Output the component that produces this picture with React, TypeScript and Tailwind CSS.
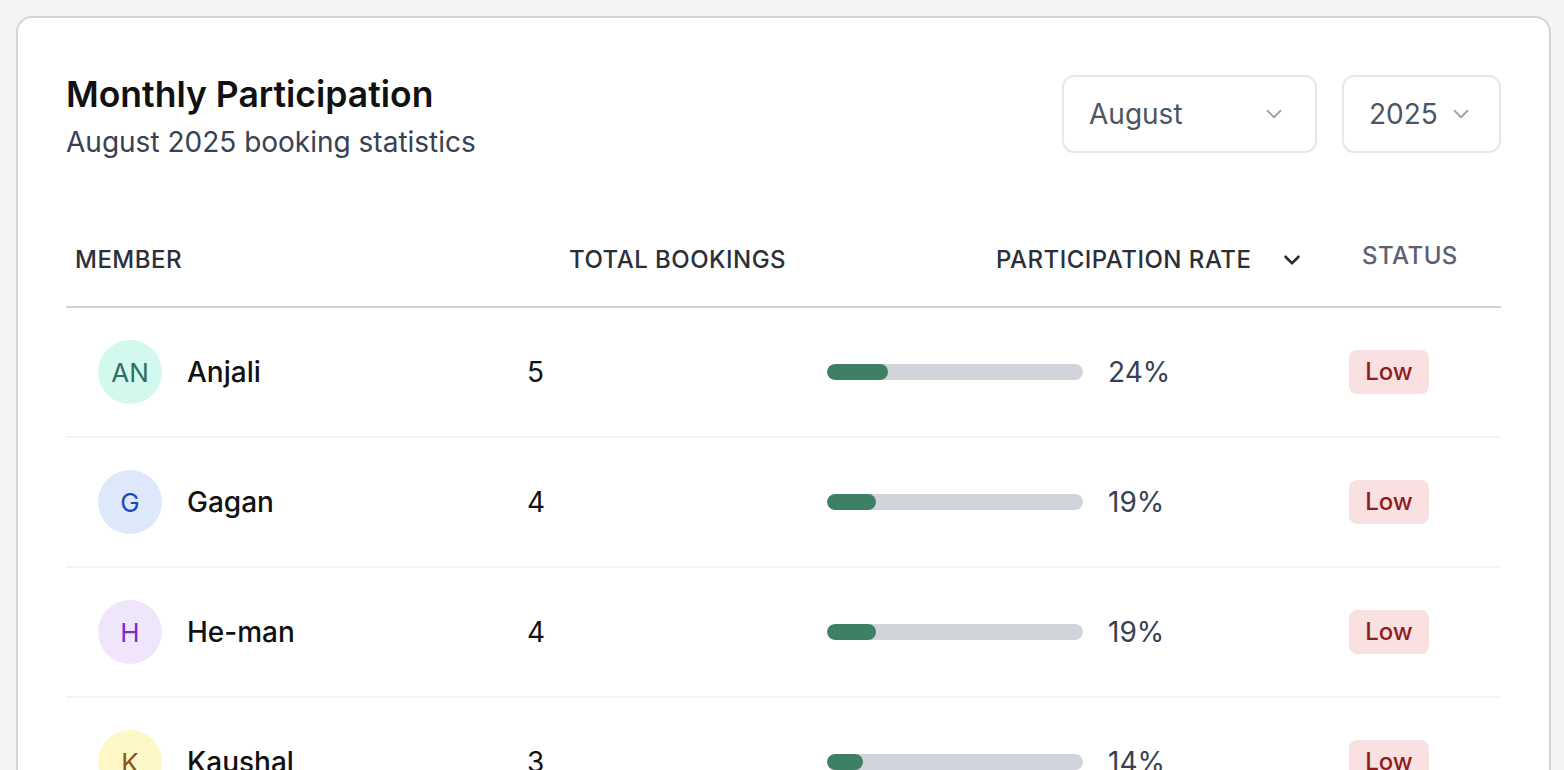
import React from 'react';

type Member = {
  name: string;
  initials: string;
  bookings: number;
  rate: number;
  avatar: string;
};

const members: Member[] = [
  { name: 'Anjali', initials: 'AN', bookings: 5, rate: 24, avatar: 'bg-[#d3f8ee] text-[#2f6f61]' },
  { name: 'Gagan', initials: 'G', bookings: 4, rate: 19, avatar: 'bg-[#dde8fb] text-[#1f47c4]' },
  { name: 'He-man', initials: 'H', bookings: 4, rate: 19, avatar: 'bg-[#efe6fc] text-[#7a2ccd]' },
  { name: 'Kaushal', initials: 'K', bookings: 3, rate: 14, avatar: 'bg-[#fdf7c7] text-[#8a5410]' },
  { name: 'Meera', initials: 'M', bookings: 2, rate: 10, avatar: 'bg-[#fde3e3] text-[#9b1c1c]' },
];

const Chevron: React.FC<{ className?: string; strokeWidth?: number }> = ({ className, strokeWidth = 2 }) => (
  <svg viewBox="0 0 24 24" fill="none" stroke="currentColor" strokeWidth={strokeWidth} strokeLinecap="round" strokeLinejoin="round" className={className}>
    <path d="m6 9 6 6 6-6" />
  </svg>
);

const Select: React.FC<{ value: string; className: string }> = ({ value, className }) => (
  <button className={`flex h-[78px] shrink-0 items-center rounded-[12px] border-2 border-[#e5e7eb] bg-white pl-[25px] text-[28px] text-[#4b5563] ${className}`}>
    <span>{value}</span>
    <Chevron className="h-[26px] w-[26px] text-[#9ca3af]" strokeWidth={1.7} />
  </button>
);

export default function App() {
  return (
    <div className="min-h-screen bg-[#f3f4f6] p-[16px] font-['Inter',sans-serif]">
      <div className="w-[1535px] rounded-[16px] border-2 border-[#d1d5db] bg-white px-[48px] pt-[55px]">
        <div className="flex items-start justify-between">
          <div>
            <h1 className="text-[35.5px] font-semibold leading-[43px] text-[#111111]">Monthly Participation</h1>
            <p className="mt-[8px] text-[28px] leading-[36px] text-[#374151]">August 2025 booking statistics</p>
          </div>
          <div className="mt-[2px] flex gap-[25px]">
            <Select value="August" className="w-[255px] justify-between pr-[28px]" />
            <Select value="2025" className="w-[159px] gap-[10px]" />
          </div>
        </div>

        <div className="mt-[85px] grid grid-cols-[451px_300px_522px_163px] border-b-2 border-[#d1d5db] pb-[31px] text-[24px] font-medium uppercase leading-[30px] tracking-[0.02em] text-[#2b2f38]">
          <div className="pl-[9px]">Member</div>
          <div className="pl-[52px]">Total Bookings</div>
          <div className="flex items-center gap-[28px] pl-[179px]">
            <span>Participation Rate</span>
            <Chevron className="h-[26px] w-[26px] text-[#2b2f38]" strokeWidth={2.4} />
          </div>
          <div className="-mt-[4px] pl-[23px] text-[#5b6170]">Status</div>
        </div>

        {members.map((m) => (
          <div key={m.name} className="grid h-[130px] grid-cols-[451px_300px_522px_163px] items-center border-b-2 border-[#f3f4f6]">
            <div className="flex items-center gap-[25px] pl-[32px]">
              <div className={`flex h-[64px] w-[64px] items-center justify-center rounded-full text-[26px] ${m.avatar}`}>
                {m.initials}
              </div>
              <span className="text-[28px] font-medium text-[#111111]">{m.name}</span>
            </div>
            <div className="pl-[10px] text-[28px] text-[#111111]">{m.bookings}</div>
            <div className="flex items-center gap-[25px] pl-[10px]">
              <div className="h-[16px] w-[256px] overflow-hidden rounded-full bg-[#d1d5db]">
                <div className="h-full rounded-full bg-[#3d8063]" style={{ width: `${m.rate}%` }} />
              </div>
              <span className="text-[28px] text-[#374151]">{m.rate}%</span>
            </div>
            <div className="pl-[10px]">
              <span className="inline-flex h-[44px] w-[80px] items-center justify-center rounded-[8px] bg-[#f9e1e1] text-[24px] font-medium text-[#8f1d1d]">
                Low
              </span>
            </div>
          </div>
        ))}
      </div>
    </div>
  );
}
